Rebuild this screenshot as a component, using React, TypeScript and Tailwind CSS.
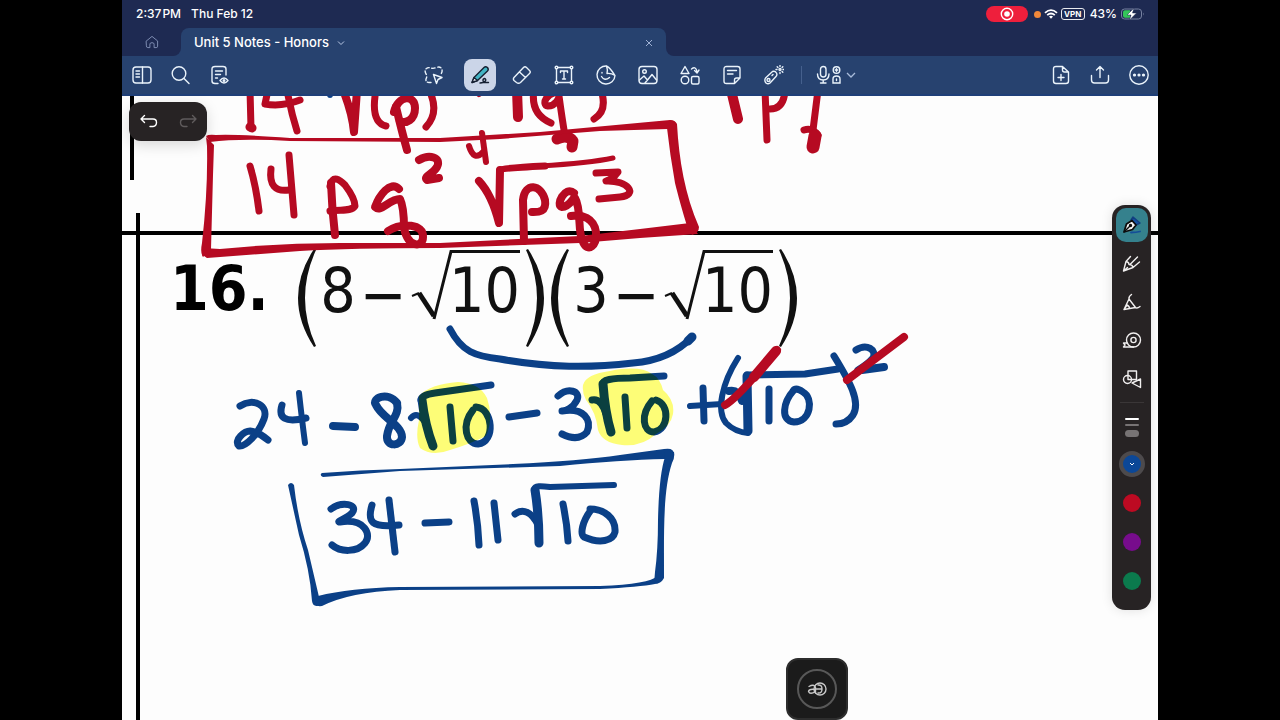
import type { ReactNode } from "react";

const RED = "#b60a22";
const BLUE = "#0b4087";

type Stroke = [path: string, width: number];

const redStrokes: Stroke[] = [
  ["M250 90L251 128", 7],
  ["M250 127L252 128", 9],
  ["M268 90L265 104Q282 107 300 100", 7],
  ["M287 90Q291 112 297 131", 7],
  ["M343 90Q352 112 354 132L357 90", 8],
  ["M376 90Q370 122 386 126", 7],
  ["M396 107Q402 132 407 150", 8],
  ["M394 112C398 95 415 94 415 108C415 120 406 124 400 121", 8],
  ["M429 90Q440 112 426 127", 7],
  ["M478 92L479 94", 6],
  ["M517 90L518 117", 10],
  ["M534 90Q530 114 551 123", 7],
  ["M560 92C546 92 541 105 548 106C556 106 559 98 559 96Q562 118 565 136", 7],
  ["M557 139Q568 134 573 141L572 147", 11],
  ["M601 90Q608 111 594 119", 7],
  ["M731 90L738 119", 10],
  ["M765 90L767 140", 7],
  ["M770 109Q784 109 785 90", 7],
  ["M803 90L806 93", 5],
  ["M818 90L813 130", 7],
  ["M804 130Q812 127 818 135", 7],
  ["M815 136L813 147", 13],
  ["M250 166Q256 186 259 211", 7],
  ["M271 169Q268 193 289 190", 7],
  ["M289 155L294 215", 7],
  ["M331 183Q332 210 335 235", 8],
  ["M330 186C333 174 340 180 345 185C351 193 355 200 355 206C351 212 340 209 330 211", 7],
  ["M399 189C390 180 379 196 375 207C381 213 389 199 400 199Q404 207 404 228C408 248 423 248 423 237C424 224 402 222 388 231", 8],
  ["M419 160C429 154 442 157 437 167C433 174 423 176 427 180L439 178", 8],
  ["M469 146Q474 162 483 152", 6],
  ["M482 133L486 162", 6],
  ["M479 181Q492 195 499 223L500 170", 8],
  ["M500 170Q502 168 545 166", 7],
  ["M540 166Q590 163 613 158", 5],
  ["M524 241L523 200C525 182 541 184 545 200C547 213 537 212 532 212", 8],
  ["M574 193C565 185 555 206 562 207C570 207 574 196 575 198C582 210 577 232 583 242C588 253 597 246 596 232C594 218 582 214 571 216", 8],
  ["M596 173L618 172Q613 179 606 181C628 180 639 195 620 197L599 199", 7],
];

const redFills = [
  "M206 136Q209 134 216 135Q236 134 290 138L440 138L540 132L670 120Q676 120 677 125L668 129L600 131L500 139L440 142L290 141Q240 138 210 142Z",
  "M667 122Q672 118 677 124C679 160 685 195 699 227Q699 233 692 235L687 226C682 210 678 195 675 183Q670 155 667 128Z",
  "M698 234L640 238L580 243L440 248Q350 248 300 251L207 258Q201 256 203 248L220 249Q280 243 340 243L440 243L580 236L640 229L690 223Z",
  "M206 137L214 145L213 175L211 249L203 257Q200 253 202 243Q208 190 207 146Z",
];

const blueStrokes: Stroke[] = [
  ["M450 329C462 352 475 356 500 359C550 368 590 368 633 363Q670 360 692 337", 7],
  ["M688 341L692 337", 9],
  ["M240 406C254 397 269 406 264 419C258 435 245 447 239 446C233 440 245 431 250 431C258 432 263 436 268 440", 7],
  ["M282 405C278 418 285 423 306 418", 7],
  ["M299 393Q302 420 305 443", 6],
  ["M333 426L355 427", 8],
  ["M397 403C388 391 371 398 376 405C382 418 402 425 402 437C401 447 386 447 387 436C389 420 400 416 397 403", 8],
  ["M411 418Q417 411 424 421", 6],
  ["M422 400Q425 425 433 446", 9],
  ["M421 400Q421 395 435 393L491 385", 7],
  ["M450 407L453 441", 7],
  ["M473 410C461 425 466 444 478 444C496 442 493 408 476 407", 7],
  ["M509 417L537 413", 7],
  ["M558 396C568 387 581 391 577 400C573 408 566 411 562 411C584 407 592 420 587 432C580 440 570 438 562 434", 7],
  ["M592 400Q601 398 606 414", 7],
  ["M603 384Q605 412 611 432", 9],
  ["M603 384Q602 378 630 378L664 376", 7],
  ["M625 397L627 428", 7],
  ["M652 401C640 415 643 432 654 432C669 430 670 404 656 400", 7],
  ["M690 406L722 404", 6],
  ["M703 388L704 421", 7],
  ["M738 358C722 383 716 411 726 423Q735 432 748 433", 6],
  ["M729 391Q738 389 742 401", 8],
  ["M747 376L748 431", 9],
  ["M747 375L805 374Q825 371 838 369", 7],
  ["M769 389L769 421", 7],
  ["M794 390C783 402 780 421 794 422C811 422 814 398 803 392Q796 387 793 391", 7],
  ["M834 356C850 382 861 402 853 415Q847 424 836 424", 7],
  ["M856 350C867 343 877 350 873 358Q868 364 858 370", 7],
  ["M862 370L884 367", 8],
  ["M331 509C342 501 359 504 352 513C346 519 335 522 340 522C365 518 372 535 365 543C357 553 340 552 332 545", 7],
  ["M372 505C367 522 371 528 399 525", 7],
  ["M389 500L395 552", 7],
  ["M425 523L449 522", 7],
  ["M474 501Q478 522 479 545", 7],
  ["M494 503L498 540", 7],
  ["M515 514C523 508 532 512 538 525", 7],
  ["M535 490Q539 515 539 543", 9],
  ["M535 488Q535 485 550 487L614 485", 6],
  ["M563 504Q567 523 568 541", 7],
  ["M591 510C582 522 580 534 584 537C600 544 613 541 615 532C616 518 604 509 590 509", 7],
];

const blueFills = [
  "M322 473Q360 470 400 469L513 464Q580 461 620 455L664 449Q675 447 674 456L665 459Q620 460 560 466L400 471L323 477Q319 475 322 473Z",
  "M664 452L674 452Q675 458 672 463C663 490 664 530 664 578Q661 584 654 584L655 572Q658 550 658 520Q659 475 665 457Z",
  "M657 576Q650 584 600 586L400 587Q350 588 318 596L313 601Q314 607 322 606Q350 592 400 590L600 589Q640 587 655 584Z",
  "M288 485Q291 481 294 485Q298 520 308 550L319 597L320 605Q313 608 312 601Q310 570 299 535Z",
];

function Ink() {
  return (
    <svg
      viewBox="122 96 1036 624"
      className="pointer-events-none absolute left-0 top-0 h-[624px] w-[1036px]"
      fill="none"
      strokeLinecap="round"
      strokeLinejoin="round"
      aria-hidden="true"
    >
      <g stroke={BLUE}>
        {blueStrokes.map(([d, w]) => (
          <path key={d} d={d} strokeWidth={w} />
        ))}
      </g>
      {blueFills.map((d) => (
        <path key={d} d={d} fill={BLUE} />
      ))}
      <circle cx="330" cy="95" r="3" fill={BLUE} />
      <g fill="#ffff78" style={{ mixBlendMode: "multiply" }}>
        <path d="M419 396Q430 384 458 382Q480 383 487 398Q494 418 486 436Q470 444 450 450Q432 457 420 448Q415 438 419 420Z" />
        <path d="M583 385Q586 374 610 371Q640 365 652 374Q660 378 663 390Q675 400 673 414Q671 426 656 434Q642 447 622 445Q602 443 598 430Q596 412 586 400Q582 393 583 385Z" />
      </g>
      <g stroke={RED}>
        {redStrokes.map(([d, w]) => (
          <path key={d} d={d} strokeWidth={w} />
        ))}
        <path d="M725 405Q737 399 777 350" strokeWidth="8" />
        <path d="M754 377L776 351" strokeWidth="10" />
        <path d="M847 380L904 337" strokeWidth="8" />
      </g>
      {redFills.map((d) => (
        <path key={d} d={d} fill={RED} />
      ))}
    </svg>
  );
}

function Factor({ n }: { n: string }) {
  return (
    <span className="flex w-[253px] items-start">
      <Delimiter />
      <span className="w-[42px] text-center">{n}</span>
      <span className="flex w-12 justify-center leading-[94px]">−</span>
      <svg viewBox="0 0 46 72" className="mt-[2px] h-[72px] w-[46px] shrink-0" fill="none" stroke="#111" aria-hidden="true">
        <path d="M5 46L12 43" strokeWidth="2" />
        <path d="M12 43L27 66" strokeWidth="5" />
        <path d="M27 69L44 1.500H46" strokeWidth="3" />
      </svg>
      <span className="mt-[2px] flex w-[67px] justify-end border-t-3 border-[#111] leading-[76px]">10</span>
      <span className="flex w-[30px] justify-center">
        <Delimiter flip />
      </span>
    </span>
  );
}

function Delimiter({ flip = false }: { flip?: boolean }) {
  return (
    <svg
      viewBox="0 0 20 100"
      className={flip ? "h-[100px] w-5 shrink-0 -scale-x-100" : "h-[100px] w-5 shrink-0"}
      fill="#111"
      aria-hidden="true"
    >
      <path d="M17 1Q-15 50 17 99L19 98Q-3 50 19 2Z" />
    </svg>
  );
}

function Icon({ children, size = "size-5" }: { children: ReactNode; size?: string }) {
  return (
    <svg
      viewBox="0 0 20 20"
      className={size}
      fill="none"
      stroke="currentColor"
      strokeWidth="1.4"
      strokeLinecap="round"
      strokeLinejoin="round"
      aria-hidden="true"
    >
      {children}
    </svg>
  );
}

function Tool({ label, children, className = "w-[42px]" }: { label: string; children: ReactNode; className?: string }) {
  return (
    <button type="button" aria-label={label} className={`flex h-9 shrink-0 items-center justify-center ${className}`}>
      {children}
    </button>
  );
}

function StatusBar() {
  return (
    <div className="flex h-7 items-center justify-between pl-[14px] pr-[13px] text-xs font-medium">
      <div className="flex gap-[10px]">
        <span className="flex gap-px">
          <span>2:37</span>
          <span>PM</span>
        </span>
        <span>Thu Feb 12</span>
      </div>
      <div className="flex items-center">
        <span className="flex h-4 w-[42px] items-center justify-center rounded-full bg-[#ee1f3c]">
          <svg viewBox="0 0 14 14" className="size-[14px]" aria-hidden="true">
            <circle cx="7" cy="7" r="5.7" fill="none" stroke="#fff" strokeWidth="1.4" />
            <circle cx="7" cy="7" r="2.8" fill="#fff" />
          </svg>
        </span>
        <span className="ml-[6px] size-[7px] rounded-full bg-[#f0883a]" />
        <svg viewBox="0 0 14 10" className="ml-[3px] h-[10px] w-[14px]" fill="none" stroke="#fff" strokeWidth="1.8" aria-hidden="true">
          <path d="M1 3.8Q7-1.6 13 3.8M3.2 6.1Q7 2.8 10.8 6.1" />
          <path d="M5 7.6Q7 6 9 7.6L7 9.8Z" fill="#fff" stroke="none" />
        </svg>
        <span className="ml-[3px] flex h-3 w-6 items-center justify-center rounded-[3px] border border-white/90 text-[8px] font-bold leading-none">
          VPN
        </span>
        <span className="ml-[5px]">43%</span>
        <svg viewBox="0 0 24 12" className="ml-1 h-3 w-6" aria-hidden="true">
          <rect x="0.5" y="1" width="20" height="10" rx="3" fill="none" stroke="#7681a0" />
          <path d="M22 4.5Q23.500 6 22 7.500Z" fill="#7681a0" />
          <path d="M4 2.300H9V9.700H4Q2 9.700 2 7.700V4.300Q2 2.300 4 2.300Z" fill="#34c759" />
          <path d="M13 0L6 7H10L8.500 12L15.500 5H11.500Z" fill="#fff" stroke="#1e2a52" strokeWidth="0.500" />
        </svg>
      </div>
    </div>
  );
}

function TabRow() {
  return (
    <div className="flex h-7 bg-[#27426f]">
      <button type="button" aria-label="Home" className="flex w-[59px] items-center justify-center rounded-br-lg bg-[#1e2a52] text-[#7f8db3]">
        <Icon size="size-[14px]">
          <path d="M2 8.500L10 2L18 8.500V16Q18 18 16 18H13V13Q13 11 10 11T7 13V18H4Q2 18 2 16Z" />
        </Icon>
      </button>
      <div className="min-w-0 flex-[485] bg-[#1e2a52]">
        <div className="flex h-7 items-center justify-between rounded-t-lg bg-[#27426f] px-[13px] pt-px">
          <button type="button" className="flex items-center gap-2 text-[13px] font-medium">
            Unit 5 Notes - Honors
            <svg viewBox="0 0 8 8" className="size-2" fill="none" stroke="#b9c8e4" aria-hidden="true">
              <path d="M1 2.500L4 5.500L7 2.500" />
            </svg>
          </button>
          <button type="button" aria-label="Close tab">
            <svg viewBox="0 0 8 8" className="size-2" fill="none" stroke="#9fb1d3" aria-hidden="true">
              <path d="M1 1L7 7M7 1L1 7" />
            </svg>
          </button>
        </div>
      </div>
      <div className="min-w-0 flex-[492] rounded-bl-lg bg-[#1e2a52]" />
    </div>
  );
}

function Toolbar() {
  return (
    <div className="flex h-10 items-center border-b-2 border-[#1f3f78] bg-[#27426f] text-[#eaf3fb]">
      <div className="flex flex-1">
        <Tool label="Sidebar" className="w-[39px]">
          <Icon>
            <rect x="1" y="2" width="18" height="16" rx="3" />
            <path d="M10.500 2V18M4 6H7.500M4 9H7.500M4 12H7.500" />
          </Icon>
        </Tool>
        <Tool label="Search" className="w-[39px]">
          <Icon>
            <circle cx="8" cy="8.500" r="6.800" />
            <path d="M13 13.500L18 18.500" />
          </Icon>
        </Tool>
        <Tool label="Read only" className="w-[39px]">
          <Icon>
            <path d="M8 18.500H5Q2 18.500 2 16V4Q2 1.500 5 1.500H13Q16 1.500 16 4V10M5.500 6H12.500M5.500 9.500H10.500M5.500 13H7.500" />
            <path d="M10 15.500Q14 10.500 18 15.500Q14 20.500 10 15.500Z" />
            <circle cx="14" cy="15.500" r="0.800" />
          </Icon>
        </Tool>
      </div>
      <div className="flex items-center">
        <Tool label="Lasso" className="mr-1 w-[42px]">
          <Icon>
            <path d="M7 17.500H5Q1.500 17.500 2 14Q3.500 11 2 9Q0 5 2.500 3.500Q4 2 7 3Q9.500 4 12 2.500Q17 1 18 4.500Q18.500 7 17 9" strokeDasharray="3.500 2.500" />
            <path d="M9.500 9.500L18 12.500L14 14.500L12.500 18.500Z" />
          </Icon>
        </Tool>
        <Tool label="Pen">
          <span className="flex size-8 items-center justify-center rounded-lg bg-[#cbd5e8] text-[#152032]">
            <Icon>
              <path d="M2 17.500L4 12.500L14 2.500Q15.500 1 17.500 2.500Q19 4.500 17.500 6L7.500 15.500Z" fill="#43b4c4" />
              <path d="M2 17.500L4 12.500L7.500 15.500Z" fill="#e9eef5" />
              <path d="M10 18C16 18 17 14 14.500 13.500C12 14 13 18 15 17.500L18.500 17.500" />
            </Icon>
          </span>
        </Tool>
        <Tool label="Eraser">
          <Icon>
            <path d="M2 12.500L11.500 2.500Q13 1 14.500 2.500L17.500 5.500Q19 7 17.500 8.500L8.500 17.500Q6.500 19 4.500 17.500L2 15.500Q0.800 14 2 12.500ZM7.500 7L13.500 12.500" />
          </Icon>
        </Tool>
        <Tool label="Text">
          <Icon>
            <path d="M3.500 2.500H16.500M3.500 17.500H16.500M2.500 3.500V16.500M17.500 3.500V16.500M6.500 7.500V6H13.500V7.500M10 6V14M8.500 14H11.500" />
            <circle cx="2.500" cy="2.500" r="1.300" fill="#27426f" />
            <circle cx="17.500" cy="2.500" r="1.300" fill="#27426f" />
            <circle cx="2.500" cy="17.500" r="1.300" fill="#27426f" />
            <circle cx="17.500" cy="17.500" r="1.300" fill="#27426f" />
          </Icon>
        </Tool>
        <Tool label="Sticker">
          <Icon>
            <path d="M10.500 1A9 9 0 1 0 19 10.500Q14 2.500 10.500 1ZM10.500 1Q12 5 11 8.500Q15 8 19 10.500" />
            <path d="M5.500 11.500Q8.500 16.500 13.500 12.500M6 7.500V8" />
          </Icon>
        </Tool>
        <Tool label="Image">
          <Icon>
            <rect x="1" y="1.500" width="18" height="17" rx="3" />
            <circle cx="6.500" cy="6.500" r="1.800" />
            <path d="M1.500 15L6 11L9.500 15L14 9.500L18.500 15M7 18L9.500 15" />
          </Icon>
        </Tool>
        <Tool label="Elements">
          <Icon>
            <path d="M5 1.500L9 8.500H1ZM11.500 4Q16 0.500 17 7M14.500 5.500L17 8L19 5" />
            <circle cx="5" cy="15" r="3.800" />
            <rect x="11.500" y="11.500" width="7.500" height="7.500" rx="1.500" />
          </Icon>
        </Tool>
        <Tool label="Sticky note">
          <Icon>
            <path d="M12.500 18.500H4.500Q2 18.500 2 16V4Q2 1.500 4.500 1.500H15.500Q18 1.500 18 4V13ZM12.500 18.500V15Q12.500 13 14.500 13H18M5.500 5.500H14.500M5.500 9H11" />
          </Icon>
        </Tool>
        <Tool label="Laser pointer">
          <Icon>
            <path d="M1.500 13L8.500 6.500Q11 5.500 12.500 8Q13.500 10 12 11.500L6 18Q4 19.500 2 18Q0 15.500 1.500 13Z" />
            <circle cx="4.500" cy="15" r="1.500" />
            <path d="M9 9.500L8 10.500" />
            <path d="M16 0.500V1.500M16 7.500V8.500M12 4.500H13M19 4.500H20M13.200 1.700L13.900 2.400M18.100 6.600L18.800 7.300M18.800 1.700L18.100 2.400" />
            <circle cx="16" cy="4.500" r="1" />
          </Icon>
        </Tool>
        <span className="mx-[6px] h-[18px] w-px bg-[#45608d]" />
        <Tool label="Record" className="w-[59px] gap-1 pr-1">
          <svg viewBox="0 0 26 20" className="h-5 w-[26px]" fill="none" stroke="currentColor" strokeWidth="1.4" strokeLinecap="round" aria-hidden="true">
            <rect x="4.500" y="1.500" width="5.500" height="10.500" rx="2.750" />
            <path d="M1.500 9Q1.500 15 7.200 15T13 9M7.200 15V18M4.500 18H10" />
            <circle cx="20.500" cy="5" r="3.300" />
            <path d="M20.500 3.700V6.300M19.200 5H21.800M17 18V14Q17 11 20.500 11T24 14V18ZM20.500 14V15.500" />
          </svg>
          <svg viewBox="0 0 10 8" className="h-2 w-[10px]" fill="none" stroke="#a9bbda" strokeWidth="1.3" aria-hidden="true">
            <path d="M1 2L5 6L9 2" />
          </svg>
        </Tool>
      </div>
      <div className="flex flex-1 justify-end">
        <Tool label="Add page" className="w-[39px]">
          <Icon>
            <path d="M11.500 1.500H5Q2.500 1.500 2.500 4V16Q2.500 18.500 5 18.500H15Q17.500 18.500 17.500 16V7ZM11.500 1.500V5Q11.500 7 13.500 7H17.500M10 9.500V15.500M7 12.500H13" />
          </Icon>
        </Tool>
        <Tool label="Share" className="w-[39px]">
          <Icon>
            <path d="M1.500 10.500V15Q1.500 18 4.500 18H15.500Q18.500 18 18.500 15V10.500M10 12.500V1.500M6.500 5L10 1.500L13.500 5" />
          </Icon>
        </Tool>
        <Tool label="More" className="w-[39px]">
          <Icon>
            <circle cx="10" cy="10" r="9.200" />
            <circle cx="5.500" cy="10" r="0.900" fill="currentColor" />
            <circle cx="10" cy="10" r="0.900" fill="currentColor" />
            <circle cx="14.500" cy="10" r="0.900" fill="currentColor" />
          </Icon>
        </Tool>
      </div>
    </div>
  );
}

function Palette() {
  return (
    <aside className="absolute right-[7px] top-[109px] flex w-[39px] flex-col items-center rounded-[13px] bg-[#272324] pb-[10px] text-[#f1efef] shadow-[0_0_12px_rgba(0,0,0,0.12)]">
      <Tool label="Fountain pen" className="h-[39px] w-full">
        <span className="flex h-[34px] w-8 items-center justify-center rounded-[10px] bg-[#35818d]">
          <Icon>
            <path d="M11 2L18 8L14 10L9 5Z" fill="#1450a0" stroke="#123f80" />
            <path d="M2 17L4.500 9L10 5.500L14 10L10.500 14.500Z" fill="#f4f4f4" stroke="#0c0c0c" strokeWidth="1.800" />
            <path d="M2.500 16.500L8 11" stroke="#0c0c0c" />
            <circle cx="8.500" cy="10.500" r="1" fill="#0c0c0c" stroke="#0c0c0c" />
            <path d="M9 17.500Q14 17.500 18 16.500" stroke="#134d98" strokeWidth="1.800" />
          </Icon>
        </span>
      </Tool>
      <Tool label="Ball pen" className="h-[38px] w-full">
        <Icon>
          <path d="M8.500 3.500L4 8.500L1.500 18L11 14.500L17.500 9M4 8.500Q7 9 7 11.500Q10.500 11.500 11 14.500M8.500 11L15.500 4M1.500 18L5.500 14.500" />
        </Icon>
      </Tool>
      <Tool label="Brush pen" className="h-[39px] w-full">
        <Icon>
          <path d="M9.500 2.500Q6.500 4.500 7 7L2 17.500L13.500 15.500Q15 17 18 14.500M7 7L13.500 15.500M2 17.500L5 13Q7.500 14 7.500 16.500" />
        </Icon>
      </Tool>
      <Tool label="Tape" className="h-[39px] w-full">
        <Icon>
          <circle cx="11.500" cy="9" r="7" />
          <circle cx="11.500" cy="9" r="2.600" />
          <path d="M11.500 16H1.500L3 14L1.500 12H5" />
        </Icon>
      </Tool>
      <Tool label="Shapes" className="h-[38px] w-full">
        <Icon>
          <rect x="6" y="2" width="8.500" height="8.500" />
          <circle cx="5.500" cy="10.500" r="4" />
          <path d="M10 14L18.500 10V18.500Z" fill="#272324" />
        </Icon>
      </Tool>
      <button type="button" aria-label="Thickness" className="flex h-[47px] w-full flex-col items-center gap-1">
        <span className="mb-[11px] mt-1 h-px w-6 bg-[#3a3637]" />
        <span className="h-[2px] w-[14px] shrink-0 rounded bg-white" />
        <span className="h-[2px] w-[14px] shrink-0 rounded bg-[#777374]" />
        <span className="h-[7px] w-[14px] shrink-0 rounded-full bg-[#777374]" />
      </button>
      <button type="button" aria-label="Blue" className="flex h-[38px] items-center">
        <span className="flex size-[26px] items-center justify-center rounded-full border-4 border-[#4d4a4c] bg-[#0b4797]">
          <svg viewBox="0 0 6 6" className="size-[6px]" fill="none" stroke="#fff" aria-hidden="true">
            <path d="M1 2L3 4L5 2" />
          </svg>
        </span>
      </button>
      <button type="button" aria-label="Red" className="flex h-[39px] items-center">
        <span className="size-[18px] rounded-full bg-[#bd0a22]" />
      </button>
      <button type="button" aria-label="Purple" className="flex h-[39px] items-center">
        <span className="size-[18px] rounded-full bg-[#770c8c]" />
      </button>
      <button type="button" aria-label="Green" className="flex h-[39px] items-center">
        <span className="size-[18px] rounded-full bg-[#0b7a4d]" />
      </button>
    </aside>
  );
}

export default function App() {
  return (
    <div className="min-h-screen bg-black font-['Inter',sans-serif]">
      <div className="mx-auto flex min-h-screen max-w-[1036px] flex-col">
        <header className="bg-[#1e2a52] text-white">
          <StatusBar />
          <TabRow />
          <Toolbar />
        </header>
        <main className="relative isolate flex-1 overflow-hidden bg-[#fdfdfd]">
          <span className="absolute left-2 top-0 h-[84px] w-1 bg-black" />
          <span className="absolute bottom-0 left-[14px] top-[117px] w-1 bg-black" />
          <span className="absolute left-0 right-0 top-[135px] h-1 bg-black" />
          <div className="absolute left-12 top-[152px] flex items-start font-['DejaVu_Sans_Condensed','DejaVu_Sans',sans-serif] text-[62px] leading-[86px] text-[#111]">
            <strong className="w-[127px] font-bold leading-[82px] text-black">16.</strong>
            <Factor n="8" />
            <Factor n="3" />
          </div>
          <Ink />
          <div className="absolute left-[7px] top-[6px] flex h-[39px] w-[78px] items-center rounded-xl bg-[#272324] shadow-[0_4px_14px_rgba(0,0,0,0.15)]">
            <button type="button" aria-label="Undo" className="flex flex-1 justify-center text-white">
              <Icon>
                <path d="M5.500 3.500L2 7L5.500 10.500M2 7H14Q17.500 7 17.500 10.500T14 14.500H11" />
              </Icon>
            </button>
            <button type="button" aria-label="Redo" className="flex flex-1 justify-center text-[#5f5b5c]">
              <Icon>
                <path d="M14.500 3.500L18 7L14.500 10.500M18 7H6Q2.500 7 2.500 10.500T6 14.500H9" />
              </Icon>
            </button>
          </div>
          <Palette />
          <button
            type="button"
            aria-label="Assistant"
            className="absolute left-[664px] top-[562px] flex size-[62px] items-center justify-center rounded-xl border-2 border-[#2d2d2d] bg-[#1b1b1b]"
          >
            <span className="flex size-10 items-center justify-center rounded-full border-2 border-[#585858] text-[#c9c9c9]">
              <Icon>
                <circle cx="13" cy="10" r="6" />
                <path d="M2 7.500Q7 4.500 8.500 8.500V14M8.500 10.500Q2 9.500 1.500 12.500Q3 16 8.500 12.500M8.500 10H14M11 6Q15 5.500 15 10T11 14" />
              </Icon>
            </span>
          </button>
        </main>
      </div>
    </div>
  );
}
